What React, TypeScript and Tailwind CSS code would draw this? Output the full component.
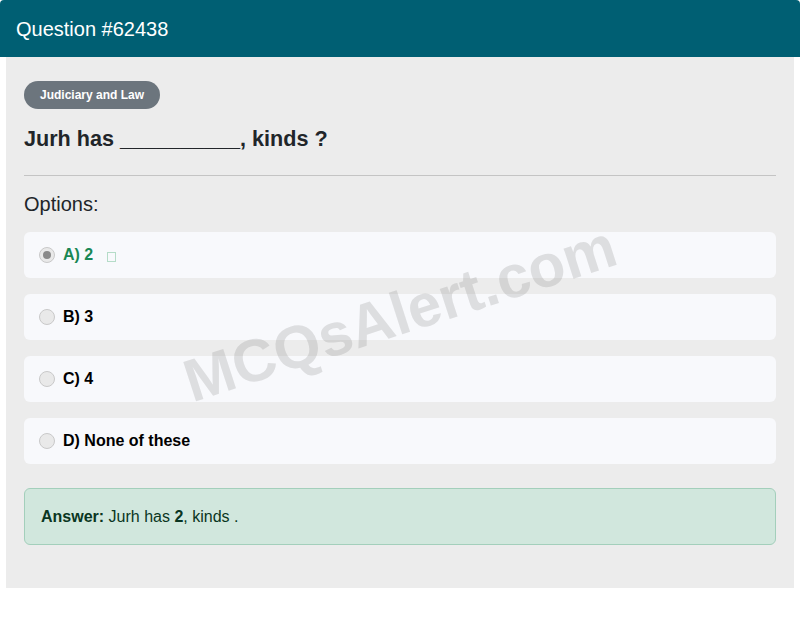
import React from "react";

type Option = { key: string; label: string; correct?: boolean };

const options: Option[] = [
  { key: "A", label: "2", correct: true },
  { key: "B", label: "3" },
  { key: "C", label: "4" },
  { key: "D", label: "None of these" },
];

function Radio({ checked }: { checked: boolean }): React.ReactElement {
  return (
    <span className="mr-2 flex h-4 w-4 shrink-0 items-center justify-center rounded-full border border-[#c9c9c9] bg-[#e9e9e9]">
      {checked ? <span className="h-2 w-2 rounded-full bg-[#8a8a8a]" /> : null}
    </span>
  );
}

export default function App(): React.ReactElement {
  return (
    <div className="relative min-h-[618px] w-[800px] bg-white font-['Liberation_Sans',Arial,sans-serif] text-[#212529]">
      <div className="flex h-[57px] items-center rounded-t-[4px] bg-[#005f73] px-4">
        <h1 className="text-[20px] leading-6 text-white">Question #62438</h1>
      </div>

      <div className="mx-[6px] flex h-[531px] flex-col bg-[#ececec] px-[18px] pt-6">
        <div>
          <span className="inline-flex h-7 items-center rounded-full bg-[#6c757d] px-4 text-[12px] font-bold text-white">
            Judiciary and Law
          </span>
        </div>

        <h2 className="mt-[17px] text-[21.6px] font-bold leading-[26px] text-[#212529]">
          Jurh has __________, kinds ?
        </h2>

        <hr className="mt-[23px] border-0 border-t border-[#c4c4c4]" />

        <p className="mt-4 text-[20px] leading-6">Options:</p>

        <ul className="mt-4 flex flex-col gap-4">
          {options.map((o) => (
            <li
              key={o.key}
              className="flex h-[46px] items-center rounded-[6px] bg-[#f8f9fc] px-[15px]"
            >
              <Radio checked={o.correct === true} />
              <span
                className={
                  o.correct
                    ? "text-[16px] font-bold text-[#198754]"
                    : "text-[16px] font-bold text-black"
                }
              >
                {o.key}) {o.label}
              </span>
              {o.correct ? (
                <span className="ml-[14px] mt-[3px] h-[10px] w-[9px] border border-[#b5dcc8]" />
              ) : null}
            </li>
          ))}
        </ul>

        <div className="mt-6 flex h-[57px] items-center rounded-[6px] border border-[#a3cfbb] bg-[#d1e7dd] px-4 text-[16px] text-[#0a3622]">
          <p>
            <strong>Answer:</strong> Jurh has <strong>2</strong>, kinds .
          </p>
        </div>
      </div>

      <div className="pointer-events-none absolute left-[400px] top-[314px] -translate-x-1/2 -translate-y-1/2 -rotate-[18deg] whitespace-nowrap text-[60px] font-bold leading-none text-[rgba(128,128,128,0.22)]">
        MCQsAlert.com
      </div>
    </div>
  );
}
